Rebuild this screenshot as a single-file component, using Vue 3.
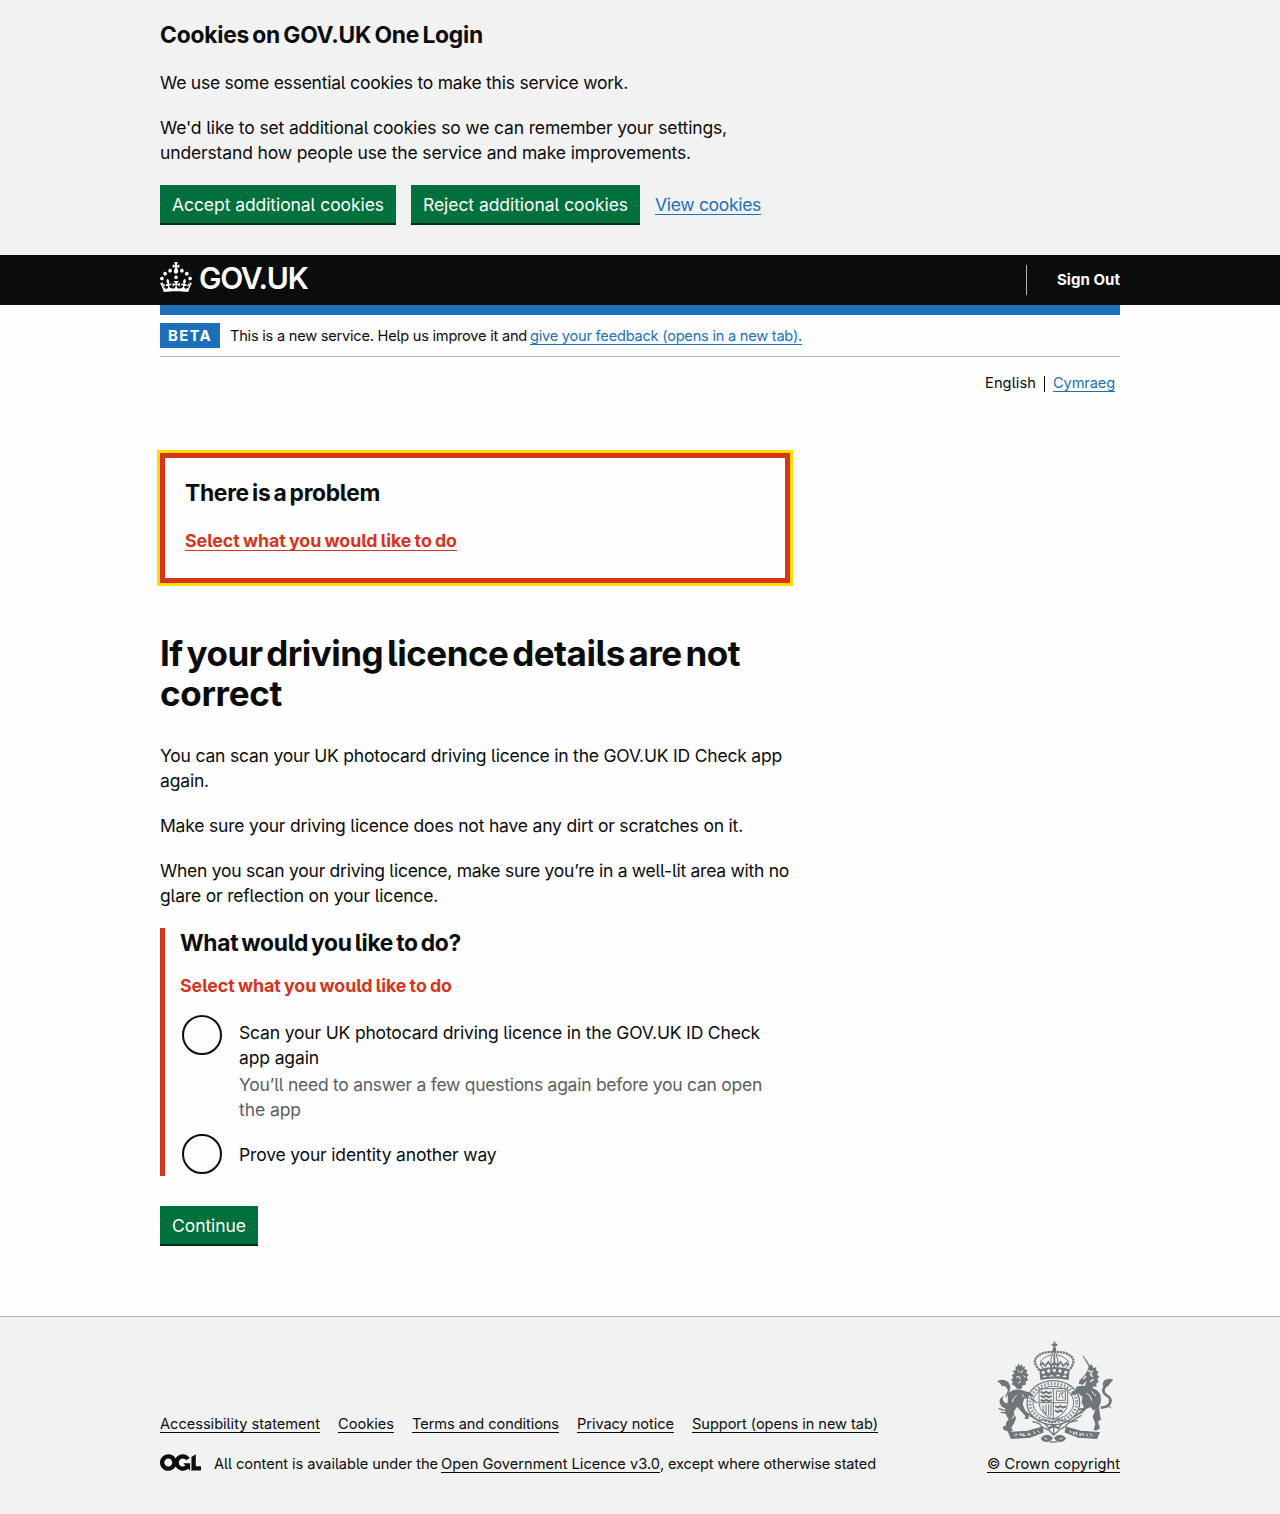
<script setup>
// Sets a line of text to a fixed measure by spreading the difference over its letters.
const vFit = {
  mounted(el, { value }) {
    const width = el.getBoundingClientRect().width
    el.style.letterSpacing = `${((value - width) / el.textContent.length).toFixed(4)}px`
  },
}

const paragraphs = [
  [
    { text: 'You can scan your UK photocard driving licence in the GOV.UK ID Check app', width: 622 },
    { text: 'again.', width: 49 },
  ],
  [{ text: 'Make sure your driving licence does not have any dirt or scratches on it.', width: 583 }],
  [
    { text: 'When you scan your driving licence, make sure you’re in a well-lit area with no', width: 629 },
    { text: 'glare or reflection on your licence.', width: 278 },
  ],
]

const footerLinks = [
  { text: 'Accessibility statement', width: 160 },
  { text: 'Cookies', width: 56 },
  { text: 'Terms and conditions', width: 147 },
  { text: 'Privacy notice', width: 97 },
  { text: 'Support (opens in new tab)', width: 186 },
]
</script>

<template>
  <div class="page">
    <section class="cookies">
      <div class="container">
        <h2 class="h-m"><span v-fit="323" class="ln">Cookies on GOV.UK One Login</span></h2>
        <p><span v-fit="468" class="ln">We use some essential cookies to make this service work.</span></p>
        <p>
          <span v-fit="567" class="ln">We'd like to set additional cookies so we can remember your settings,</span><br />
          <span v-fit="531" class="ln">understand how people use the service and make improvements.</span>
        </p>
        <div class="actions">
          <button class="btn"><span v-fit="212" class="ln">Accept additional cookies</span></button>
          <button class="btn"><span v-fit="205" class="ln">Reject additional cookies</span></button>
          <a v-fit="106" class="ln link" href="#">View cookies</a>
        </div>
      </div>
    </section>

    <header class="header">
      <div class="container header-row">
        <a class="logo" href="#">
          <svg width="32" height="30" viewBox="0 0 32 30" fill="currentColor" aria-hidden="true">
            <path d="M22.6 10.4c-1 .4-2-.1-2.4-1-.4-.9.1-2 1-2.4.9-.4 2 .1 2.4 1s-.1 2-1 2.4m-5.9 6.7c-.9.4-2-.1-2.4-1-.4-.9.1-2 1-2.4.9-.4 2 .1 2.4 1s-.1 2-1 2.4m10.8-3.7c-1 .4-2-.1-2.4-1-.4-.9.1-2 1-2.4.9-.4 2 .1 2.4 1s0 2-1 2.4m3.3 4.8c-1 .4-2-.1-2.4-1-.4-.9.1-2 1-2.4.9-.4 2 .1 2.4 1s-.1 2-1 2.4M17 4.7l2.3 1.2V2.5l-2.3.7-.2-.2.9-3h-3.4l.9 3-.2.2c-.1.1-2.3-.7-2.3-.7v3.4L15 4.7c.1.1.1.2.2.2l-1.3 4c-.1.2-.1.4-.1.6 0 1.1.8 2 1.9 2.2h.7c1-.2 1.9-1.1 1.9-2.1 0-.2 0-.4-.1-.6l-1.3-4c-.1-.2 0-.2.1-.3m-7.6 5.7c.9.4 2-.1 2.4-1 .4-.9-.1-2-1-2.4-.9-.4-2 .1-2.4 1s0 2 1 2.4m-5 3c.9.4 2-.1 2.4-1 .4-.9-.1-2-1-2.4-.9-.4-2 .1-2.4 1s.1 2 1 2.4m-3.2 4.8c.9.4 2-.1 2.4-1 .4-.9-.1-2-1-2.4-.9-.4-2 .1-2.4 1s0 2 1 2.4m14.8 11c4.4 0 8.6.3 12.3.8 1.1-4.5 2.4-7 3.7-8.8l-2.5-.9c.2 1.3.3 1.9 0 2.7-.4-.4-.8-1.1-1.1-2.3l-1.2 4c.7-.5 1.3-.8 2-.9-1.1 2.5-2.6 3.1-3.5 3-1.1-.2-1.7-1.2-1.5-2.1.3-1.2 1.5-1.5 2.1-.1 1.1-2.3-.8-3-2-2.3 1.9-1.9 2.1-3.5.6-5.6-2.1 1.6-2.1 3.2-1.2 5.5-1.2-1.4-3.2-.6-2.5 1.6.9-1.4 2.1-.5 1.9.8-.2 1.1-1.7 2.1-3.5 1.9-2.7-.2-2.9-2.1-2.9-3.6.7-.1 1.9.5 2.9 1.9l.4-4.3c-1.1 1.1-2.1 1.4-3.2 1.4.4-1.2 2.1-3 2.1-3h-5.4s1.7 1.9 2.1 3c-1.1 0-2.1-.2-3.2-1.4l.4 4.3c1-1.4 2.2-2 2.9-1.9-.1 1.5-.2 3.4-2.9 3.6-1.9.2-3.4-.8-3.5-1.9-.2-1.3 1-2.2 1.9-.8.7-2.3-1.2-3-2.5-1.6.9-2.2.9-3.9-1.2-5.5-1.5 2-1.3 3.7.6 5.6-1.2-.7-3.1 0-2 2.3.6-1.4 1.8-1.1 2.1.1.2.9-.3 1.9-1.5 2.1-.9.2-2.4-.5-3.5-3 .6 0 1.2.3 2 .9l-1.2-4c-.3 1.1-.7 1.9-1.1 2.3-.3-.8-.2-1.4 0-2.7l-2.9.9C1.3 23 2.6 25.5 3.7 30c3.7-.5 7.9-.8 12.3-.8" />
          </svg>
          <span v-fit="108.5" class="ln wordmark">GOV.UK</span>
        </a>
        <nav class="account"><a v-fit="63" class="ln" href="#">Sign Out</a></nav>
      </div>
    </header>

    <div class="container">
      <div class="bar"></div>
      <div class="phase">
        <strong class="tag"><span v-fit="44" class="ln">BETA</span></strong>
        <span class="phase-text">
          <span v-fit="297" class="ln">This is a new service. Help us improve it and</span>
          <a v-fit="272" class="ln link" href="#">give your feedback (opens in a new tab).</a>
        </span>
      </div>
      <nav class="langs">
        <span v-fit="51" class="ln">English</span>
        <span class="sep"></span>
        <a v-fit="62" class="ln link" href="#">Cymraeg</a>
      </nav>

      <main class="main">
        <div class="summary">
          <h2 class="h-m"><span v-fit="195" class="ln">There is a problem</span></h2>
          <a v-fit="272" class="ln link error-link" href="#">Select what you would like to do</a>
        </div>

        <h1>
          <span v-fit="580" class="ln">If your driving licence details are not</span><br />
          <span v-fit="122" class="ln">correct</span>
        </h1>

        <p v-for="(lines, i) in paragraphs" :key="i">
          <template v-for="(line, j) in lines" :key="j">
            <br v-if="j" /><span v-fit="line.width" class="ln">{{ line.text }}</span>
          </template>
        </p>

        <div class="group">
          <h2 class="h-m"><span v-fit="281" class="ln">What would you like to do?</span></h2>
          <div class="error"><span v-fit="272" class="ln">Select what you would like to do</span></div>
          <div class="radio">
            <span class="circle"></span>
            <div class="radio-text">
              <label>
                <span v-fit="521" class="ln">Scan your UK photocard driving licence in the GOV.UK ID Check</span><br />
                <span v-fit="80" class="ln">app again</span>
              </label>
              <div class="hint">
                <span v-fit="523" class="ln">You’ll need to answer a few questions again before you can open</span><br />
                <span v-fit="62" class="ln">the app</span>
              </div>
            </div>
          </div>
          <div class="radio">
            <span class="circle"></span>
            <div class="radio-text">
              <label><span v-fit="257.5" class="ln">Prove your identity another way</span></label>
            </div>
          </div>
        </div>

        <button class="btn"><span v-fit="74" class="ln">Continue</span></button>
      </main>
    </div>

    <footer class="footer">
      <div class="container footer-row">
        <div>
          <div class="footer-links">
            <a v-for="link in footerLinks" :key="link.text" v-fit="link.width" class="ln link" href="#">{{ link.text }}</a>
          </div>
          <div class="licence">
            <svg width="41" height="17" viewBox="0 0 483.2 195.7" fill="currentColor" aria-hidden="true">
              <path d="M421.5 142.8V.1l-50.7 32.3v161.1h112.4v-50.7zm-122.3-9.6A47.12 47.12 0 0 1 221 97.8c0-26 21.1-47.1 47.1-47.1 16.7 0 31.4 8.7 39.7 21.8l42.7-27.2A97.63 97.63 0 0 0 268.1 0c-36.5 0-68.3 20.1-85.1 49.7A98 98 0 0 0 97.8 0C43.9 0 0 43.9 0 97.8s43.9 97.8 97.8 97.8c36.5 0 68.3-20.1 85.1-49.7a97.76 97.76 0 0 0 149.6 25.4l19.4 22.2h3v-87.8h-80l24.3 27.5zM97.8 145c-26 0-47.1-21.1-47.1-47.1s21.1-47.1 47.1-47.1 47.1 21.1 47.1 47.1S123.8 145 97.8 145" />
            </svg>
            <span class="licence-text">
              <span v-fit="224" class="ln">All content is available under the</span>
              <a v-fit="219" class="ln link" href="#">Open Government Licence v3.0</a><span v-fit="216" class="ln">, except where otherwise stated</span>
            </span>
          </div>
        </div>
        <div class="crown">
          <svg class="arms" width="118" height="104" viewBox="45 33 354 312" fill="none" stroke="#6f777b" stroke-width="4" aria-hidden="true">
            <!-- crown -->
            <g fill="#6f777b" stroke="none">
              <path d="M220 35h7l-1 7 6-1v7l-6-1 2 10h-9l2-10-6 1v-7l6 1z" />
              <circle cx="223" cy="61" r="6" />
              <path d="M178 118q45-14 91 0l-3 32q-43-9-85 0z" />
            </g>
            <path d="M179 121q-25-28-6-42 19-16 49-12 33-4 51 12 17 14-6 42" stroke-width="7" stroke-dasharray="7 2" />
            <path d="M190 116q-15-18-3-28 14-11 27-13M256 116q16-18 4-28-14-11-27-13M218 68q-9 22-4 45M228 68q9 22 4 45" stroke-width="3" />
            <path d="M223 72v40M180 106l8-7 8 9 9-12 8 12 10-11 10 11 8-12 9 12 9-9 8 7" stroke-width="5" />
            <g fill="#f2f2f2" stroke="none">
              <circle cx="190" cy="127" r="5" /><circle cx="206" cy="123" r="5" /><circle cx="223" cy="121" r="5" />
              <circle cx="240" cy="123" r="5" /><circle cx="257" cy="127" r="5" />
              <path d="M186 142l8-6 8 5zM206 140l8-6 8 5zM226 139l8-6 8 6zM246 141l8-6 8 7z" />
            </g>
            <!-- garter and shield -->
            <ellipse cx="220" cy="218" rx="79" ry="66" stroke-width="4" />
            <ellipse cx="220" cy="218" rx="70" ry="57" stroke-width="9" stroke-dasharray="5 5" stroke-opacity=".75" />
            <ellipse cx="220" cy="218" rx="61" ry="49" stroke-width="3" />
            <path d="M177 176h86v45q-3 30-43 47-40-17-43-47zM220 176v91M177 218h86" stroke-width="3" />
            <path d="M182 185l9 5 7-5 8 5 9-4M182 197l9 5 7-5 8 5 9-4M182 209l9 5 7-5 8 5 9-4M225 228l9 5 7-5 8 5 9-4M225 241l9 5 7-5 8 5" stroke-width="6" />
            <path d="M229 183h27v28h-27zM236 204l4-14 9-2-4 9 6 8M189 226q-3 14 8 26M198 223v30M206 223v34M213 223v36" stroke-width="3" />
            <!-- lion -->
            <g fill="#6f777b" stroke="none">
              <path d="M107 106l4 6 4-12 5 9 6-7 2 10 8-3-3 9 10 2-5 8 8 6-6 7 5 9-8 4 1 10-9 2-6 12-12-2-7-8-9-5 4-7-6-7 7-6-5-8 8-4-5-9 9-1z" />
              <path d="M84 190q14-14 37-11l26 8q11 4 14 14l-9-1-4-5-4 8-12 4-4 16 8 19 11 13-2 12h-11l2-9-14-16-11-12-10 16 7 19-5 13-9 15 5 8-11 8-7-6-10-3-3-10 9-3 2-12 7-6-10-19q-4-18 7-33z" />
            </g>
            <path d="M113 122l8 5M128 120l-4 9M108 142l9-3 4 9M130 137l7 6M123 154l-9 5" stroke="#f2f2f2" stroke-width="3" />
            <path d="M83 237q-20-3-24-19-3-14 14-21 14-8 9-20-5-12-16-8-8-14-16-15 12-7 21-4 18 3 20 21 1 15-13 23-13 7-9 17 5 10 18 11" fill="#6f777b" stroke="none" />
            <path d="M74 242l-18-7M78 249l-16-2M86 183l-8 18M152 205l20 14M128 241l31 19" stroke-width="4" />
            <path d="M110 196q-12 9-13 20M127 193l6 9M105 253l-9 13" stroke="#f2f2f2" stroke-width="3" />
            <!-- unicorn -->
            <path d="M309 77l18 32M316 87l13 20" stroke-width="3" />
            <g fill="#6f777b" stroke="none">
              <path d="M326 109l8-6 7 11 8-2-1 9 8 4-5 8 7 7-6 7 4 9-8 5 2 10-10-2-4 12-12-4-10-6 6-18-12 11-12-3 2-9 17-18 8-16z" />
              <path d="M289 170q28-7 45 4 23 5 28 23 3 20-5 33l3 24 3 14-9 7 6 20-10 6h-9l2-9 3-10-8-22 6-15-13-14-12 6-16 16-2-8 11-14-7-13 2-17-13-12-12 5-8-7 12-5z" />
            </g>
            <path d="M322 121l10 4M338 122l-7 11 7 7M318 138l-8 9M341 148l-11 7" stroke="#f2f2f2" stroke-width="4" />
            <path d="M319 189q14 7 17 23M335 184l13 14M345 239l-8 14" stroke="#f2f2f2" stroke-width="3" />
            <path d="M362 233q22-1 28-14 5-14-10-23-14-9-8-22 5-11 15-11" stroke-width="8" />
            <path d="M372 171q-5-9 0-17 9-9 26-5l-12 15zM386 212l11-3M380 226l14 8" fill="#6f777b" stroke-width="3" />
            <path d="M310 170l-24 16-14 9M304 246l-25 16M311 236l-15 3" stroke-width="5" />
            <!-- compartment and motto scroll -->
            <path d="M150 257l26 15q20-7 40 6l19-9 35 7 34-20M157 275q25 4 27 15l19 9 18-10 20 9 17-10q3-12 35-16" stroke-width="4" />
            <path d="M87 308l56-4 43-12 3 14-39 15-56 4zM357 308l-55-4-43-12-3 14 39 15 55 4z" fill="#6f777b" />
            <path d="M103 315l10-1M118 315l5-5v8M132 309l-5 8 10-1M145 308v7l8-3M161 304l4 8M173 302l5 6M270 301l3 8M281 304v9l9-7v10M300 308v9l9-7 2 8M321 311v8M329 311l9 7" stroke="#f2f2f2" stroke-width="3" />
            <path d="M193 279l14 15 13-10 15 10 13-15M206 300l15 15 17-15M221 288v23" stroke-width="4" />
            <path d="M182 324q18-19 37-1-7 14-21 13-14-1-16-12zM258 324q-18-19-36-1 7 14 20 13 13-1 16-12z" fill="#6f777b" stroke="none" />
            <path d="M193 324l9 4M239 328l9-4M214 337h13" stroke="#f2f2f2" stroke-width="3" />
            <path d="M209 336h22" stroke-width="4" />
          </svg>
          <a v-fit="133" class="ln link" href="#">© Crown copyright</a>
        </div>
      </div>
    </footer>
  </div>
</template>

<style>
body {
  background: #fdfdfd;
}
</style>

<style scoped>
.page {
  font-family: Inter, "Liberation Sans", sans-serif;
  font-size: 17.5px;
  line-height: 25px;
  font-feature-settings: "cv05";
  color: #0b0c0c;
}
.ln {
  white-space: nowrap;
}
.container {
  width: 960px;
  margin: 0 auto;
}
p {
  margin: 0 0 20px;
}
.h-m {
  font-size: 22.8px;
  line-height: 30px;
  font-weight: 700;
  word-spacing: -2px;
  margin: 0 0 20px;
}
.link {
  color: #1d70b8;
  text-decoration: underline 1px;
  text-underline-offset: 3px;
  text-decoration-skip-ink: none;
}
.cookies {
  background: #f2f2f2;
  padding: 20px 0 30px;
}
.actions {
  display: flex;
  gap: 15px;
  align-items: flex-start;
  height: 40px;
}
.actions .link {
  margin-top: 7px;
}
.btn {
  display: block;
  height: 38px;
  margin: 0 0 2px;
  padding: 0 12px;
  border: 0;
  background: #00703c;
  box-shadow: 0 2px 0 #002d18;
  color: #fff;
  font: inherit;
  font-feature-settings: inherit;
}
.header {
  background: #0b0c0c;
  color: #fff;
}
.header-row {
  display: flex;
  justify-content: space-between;
  align-items: center;
  height: 50px;
}
.logo {
  display: flex;
  gap: 7px;
  align-items: center;
  color: #fff;
  text-decoration: none;
}
.logo svg {
  margin-bottom: 7px;
}
.wordmark {
  font-size: 30px;
  line-height: 30px;
  font-weight: 600;
  margin-bottom: 5px;
}
.account {
  display: flex;
  align-items: center;
  height: 30px;
  padding-left: 30px;
  border-left: 1px solid #b1b4b6;
  font-size: 15px;
  font-weight: 700;
}
.account a {
  margin-bottom: 2px;
  color: #fff;
  text-decoration: none;
}
.bar {
  height: 10px;
  background: #1d70b8;
}
.phase {
  display: flex;
  align-items: center;
  gap: 10px;
  height: 25px;
  padding: 8px 0;
  border-bottom: 1px solid #b1b4b6;
  font-size: 14.6px;
}
.tag {
  height: 25px;
  padding: 0 8px;
  background: #1d70b8;
  color: #fff;
  font-size: 15px;
}
.phase-text,
.licence-text {
  display: flex;
}
.phase-text {
  padding-top: 2px;
}
.phase-text .link {
  margin-left: 3px;
}
.langs {
  display: flex;
  justify-content: flex-end;
  align-items: center;
  padding: 14px 5px 0 0;
  font-size: 14.6px;
}
.sep {
  width: 1px;
  height: 16px;
  margin: 0 8px;
  background: #0b0c0c;
}
.main {
  width: 630px;
  padding: 57px 0 70px;
}
.summary {
  margin-bottom: 50px;
  padding: 20px 20px 25px;
  border: 5px solid #d4351c;
  outline: 3px solid #ffdd00;
}
.error-link,
.error {
  color: #d4351c;
  font-size: 17.8px;
  font-weight: 700;
  word-spacing: -1px;
}
h1 {
  margin: 0 0 30px;
  font-size: 35px;
  line-height: 40px;
  font-weight: 700;
  word-spacing: -4px;
}
.group {
  margin-bottom: 30px;
  padding-left: 15px;
  border-left: 5px solid #d4351c;
}
.group .h-m,
.error {
  margin-bottom: 15px;
}
.radio {
  display: flex;
  min-height: 44px;
  margin-bottom: 10px;
}
.radio:last-child {
  margin-bottom: 0;
}
.circle {
  box-sizing: border-box;
  width: 40px;
  height: 40px;
  margin: 2px 17px 0 2px;
  border: 2px solid #0b0c0c;
  border-radius: 50%;
}
.radio-text {
  padding-top: 7px;
}
.radio + .radio .radio-text {
  padding-top: 10px;
}
.hint {
  margin-top: 2px;
  color: #5a5f62;
}
.footer {
  height: 197px;
  border-top: 1px solid #b1b4b6;
  background: #f2f2f2;
  font-size: 14.6px;
  line-height: 20px;
}
.footer .link {
  color: #0b0c0c;
}
.footer-row {
  display: flex;
  justify-content: space-between;
  align-items: flex-end;
  padding-top: 24px;
}
.footer-links {
  display: flex;
  gap: 18px;
  margin-bottom: 20px;
}
.licence {
  display: flex;
  gap: 13px;
}
.licence-text .link {
  margin-left: 3px;
}
.crown {
  display: flex;
  flex-direction: column;
  align-items: flex-end;
}
.arms {
  margin: 0 7px 9px 0;
}
</style>
